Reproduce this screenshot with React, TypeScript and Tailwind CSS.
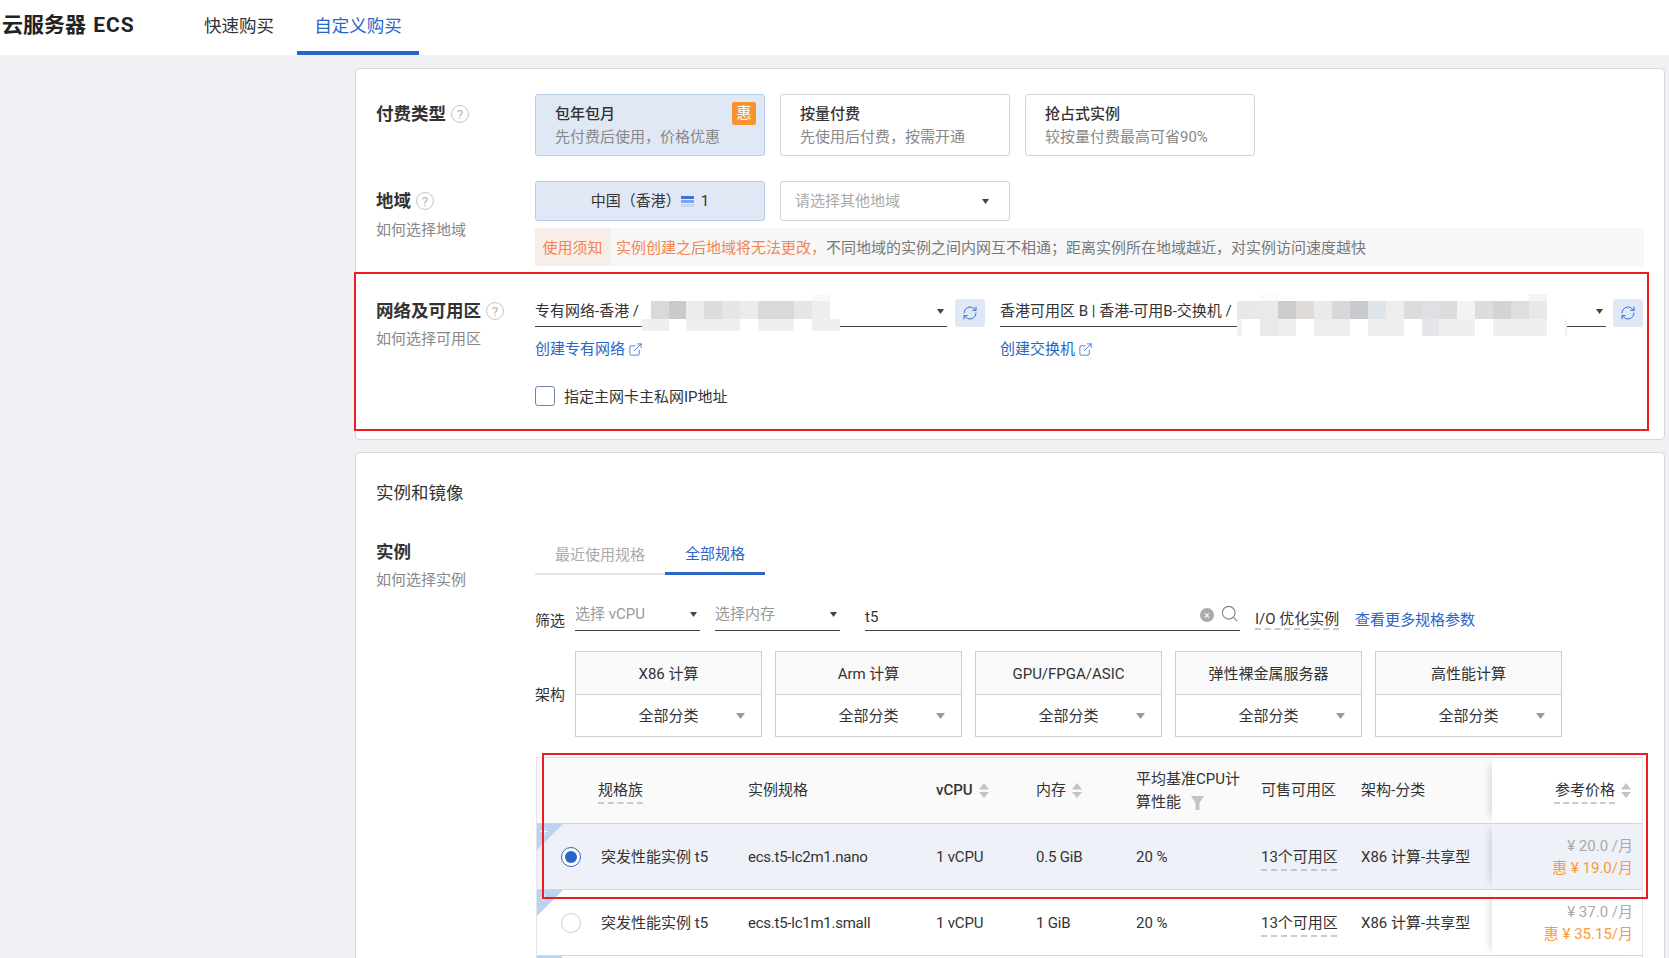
import { ExternalLink, RefreshCw, Search } from "lucide-react";

const label = "text-[17.5px] leading-[26px] font-bold text-[#333]";
const subLabel = "text-[15px] leading-5 text-[#888]";
const dashed = "underline decoration-dashed decoration-[#bbb] underline-offset-[7px] [text-decoration-skip-ink:none]";

// pixel blocks covering the hidden resource names: x, y, w, h, colour
const mosaicVpc: [number, number, number, number, string][] = [
  [9, 6, 18, 18, "#d9d9d9"], [27, 6, 17, 18, "#c9cacc"], [44, 6, 18, 18, "#ececec"], [62, 6, 18, 18, "#dcdddd"],
  [80, 6, 18, 18, "#e6e6e6"], [98, 6, 18, 18, "#ebebeb"], [116, 6, 36, 18, "#dadada"], [152, 6, 18, 18, "#e6e6e6"],
  [170, 0, 18, 6, "#f8f8f8"], [170, 6, 18, 18, "#eeeeee"],
  [0, 24, 27, 12, "#efefef"], [44, 24, 54, 12, "#efefef"], [116, 24, 36, 12, "#efefef"], [170, 24, 28, 12, "#efefef"],
];

const mosaicSwitch: [number, number, number, number, string][] = [
  [0, 7, 23, 18, "#e6e8ea"], [23, 7, 18, 18, "#e9e9e9"], [41, 7, 18, 18, "#cccccc"], [59, 7, 18, 18, "#e0dcd8"],
  [77, 7, 18, 18, "#eaeaea"], [95, 7, 18, 18, "#d8d8d8"], [113, 7, 18, 18, "#c9cace"], [131, 7, 18, 18, "#dfe4e8"],
  [149, 7, 18, 18, "#ededed"], [167, 7, 18, 18, "#dddbdc"], [185, 7, 17, 18, "#e0dfe3"], [202, 7, 18, 18, "#dddcda"],
  [220, 7, 18, 18, "#f3f3f3"], [238, 7, 18, 18, "#dedddd"], [256, 7, 18, 18, "#d4d3d3"], [274, 7, 18, 18, "#dedede"],
  [292, 7, 18, 18, "#e8e8e6"], [292, 0, 18, 7, "#f5f4f2"], [23, 0, 18, 7, "#fbfbfb"],
  [0, 25, 5, 17, "#f2f2f2"], [23, 25, 18, 17, "#e8eaea"], [41, 25, 18, 17, "#efefef"], [77, 25, 36, 17, "#eeeeee"],
  [131, 25, 36, 17, "#efefef"], [185, 25, 17, 17, "#e6e6ea"], [202, 25, 36, 17, "#efefef"], [256, 25, 54, 17, "#efefef"],
  [328, 25, 2, 17, "#efefef"],
];

const archs = ["X86 计算", "Arm 计算", "GPU/FPGA/ASIC", "弹性裸金属服务器", "高性能计算"];

const rows = [
  { spec: "ecs.t5-lc2m1.nano", mem: "0.5 GiB", price: "¥ 20.0 /月", sale: "惠 ¥ 19.0/月", selected: true },
  { spec: "ecs.t5-lc1m1.small", mem: "1 GiB", price: "¥ 37.0 /月", sale: "惠 ¥ 35.15/月", selected: false },
];

const cols = "grid grid-cols-[61px_150px_188px_100px_100px_125px_100px_131px_1fr]";

function Help() {
  return (
    <span className="ml-[5px] inline-flex h-[18px] w-[18px] items-center justify-center rounded-full border-[1.5px] border-[#c6c6c6] text-[13px] leading-none font-normal text-[#b5b5b5]">
      ?
    </span>
  );
}

function Caret({ className = "" }: { className?: string }) {
  return (
    <svg width="7" height="5" viewBox="0 0 7 5" className={className}>
      <path d="M0 0h7L3.5 5z" fill="#444" />
    </svg>
  );
}

function SortIcon() {
  return (
    <svg width="10" height="15" viewBox="0 0 10 15" className="ml-[6px]">
      <path d="M5 0l5 6.5H0z" fill="#c4c4c4" />
      <path d="M0 9h10l-5 6z" fill="#c4c4c4" />
    </svg>
  );
}

function Corner() {
  return (
    <svg width="26" height="26" viewBox="0 0 26 26" className="absolute top-0 left-0">
      <path d="M0 0h26L0 26z" fill="#b9d3f0" />
      <path d="M7 4v7M3.5 7.5h7" stroke="#fff" strokeWidth="1" />
    </svg>
  );
}

function Refresh() {
  return (
    <div className="flex h-7 w-[30px] shrink-0 items-center justify-center rounded-[3px] bg-[#e0e8f6]">
      <RefreshCw size={16} strokeWidth={1.5} className="text-[#3b6fd0]" />
    </div>
  );
}

function Mosaic({ w, h, cells, className }: { w: number; h: number; cells: [number, number, number, number, string][]; className: string }) {
  return (
    <svg width={w} height={h} viewBox={`0 0 ${w} ${h}`} className={className}>
      <rect width={w} height={h} fill="#fff" />
      {cells.map(([x, y, cw, ch, fill], i) => (
        <rect key={i} x={x} y={y} width={cw} height={ch} fill={fill} />
      ))}
    </svg>
  );
}

function PayOption({ title, desc, active }: { title: string; desc: string; active?: boolean }) {
  return (
    <div
      className={`relative h-[62px] w-[230px] rounded-[3px] border pt-[7px] pl-[19px] ${
        active ? "border-[#b4cdec] bg-[#e0e8f6]" : "border-[#d0d3d8] bg-white"
      }`}
    >
      <div className="text-[15px] leading-[24px] font-medium text-[#333]">{title}</div>
      <div className="text-[15px] leading-[23px] text-[#888]">{desc}</div>
      {active && (
        <span className="absolute top-[7px] right-[8px] flex h-[23px] w-[24px] items-center justify-center rounded-[2px] bg-[#f7952c] text-[15px] text-white">
          惠
        </span>
      )}
    </div>
  );
}

export default function App() {
  return (
    <div className="h-screen overflow-hidden bg-[#eff1f5] font-['Roboto','Noto_Sans_CJK_SC',sans-serif] text-[#333]">
      <header className="flex h-[55px] bg-white">
        <div className="w-[187px] pl-[2px] text-[21px] leading-[50px] font-bold text-[#222]">
          云服务器 <span className="ml-[2px] tracking-[1px]">ECS</span>
        </div>
        <div className="flex h-[55px] w-[104px] items-center justify-center pb-[2px] text-[17.5px]">快速购买</div>
        <div className="ml-[6px] flex h-[55px] w-[122px] items-center justify-center border-b-4 border-[#2b65c8] pt-[2px] text-[17.5px] text-[#2b65c8]">
          自定义购买
        </div>
      </header>

      <main className="pt-[13px] pr-[4px] pl-[355px]">
        <section className="rounded-[4px] border border-[#d5d7da] bg-white pt-[25px] pb-[8px]">
          <div className="flex">
            <div className="w-[179px] pt-[7px] pl-[20px]">
              <div className={`flex items-center ${label}`}>
                付费类型
                <Help />
              </div>
            </div>
            <div className="flex gap-[15px]">
              <PayOption title="包年包月" desc="先付费后使用，价格优惠" active />
              <PayOption title="按量付费" desc="先使用后付费，按需开通" />
              <PayOption title="抢占式实例" desc="较按量付费最高可省90%" />
            </div>
          </div>

          <div className="mt-[25px] flex">
            <div className="w-[179px] pt-[7px] pl-[20px]">
              <div className={`flex items-center ${label}`}>
                地域
                <Help />
              </div>
              <div className={`mt-[6px] ${subLabel}`}>如何选择地域</div>
            </div>
            <div>
              <div className="flex gap-[15px]">
                <div className="flex h-10 w-[230px] items-center justify-center rounded-[3px] border border-[#b4cdec] bg-[#e0e8f6] text-[15px]">
                  中国（香港）
                  <svg width="13" height="11" viewBox="0 0 13 11" className="mr-[7px]">
                    <rect width="13" height="3" fill="#3f74d3" />
                    <rect y="4" width="13" height="3" fill="#7ea6e6" />
                    <rect y="8" width="13" height="3" fill="#c0d6f3" />
                  </svg>
                  1
                </div>
                <div className="flex h-10 w-[230px] items-center justify-between rounded-[3px] border border-[#d0d3d8] pr-5 pl-[14px] text-[15px] text-[#aaa]">
                  请选择其他地域
                  <Caret />
                </div>
              </div>
              <div className="mt-[7px] flex h-[38px] w-[1109px] items-center bg-[#f7f7f7] text-[15px]">
                <div className="flex h-full w-[75px] items-center justify-center bg-[#f7eee9] pt-[2px] text-[#f5854f]">使用须知</div>
                <span className="ml-[6px] pt-[2px] text-[#f5854f]">实例创建之后地域将无法更改，</span>
                <span className="pt-[2px] text-[#777]">不同地域的实例之间内网互不相通；距离实例所在地域越近，对实例访问速度越快</span>
              </div>
            </div>
          </div>

          <div className="mt-[6px] -ml-[2px] flex h-[159px] w-[1295px] border-2 border-[#ed1c24] pt-[23px]">
            <div className="w-[179px] pt-[1px] pl-[20px]">
              <div className={`flex items-center ${label}`}>
                网络及可用区
                <Help />
              </div>
              <div className={`mt-[5px] ${subLabel}`}>如何选择可用区</div>
            </div>
            <div className="pt-[2px]">
              <div className="flex">
                <div className="w-[450px]">
                  <div className="flex">
                    <div className="relative flex h-7 w-[412px] items-center justify-between border-b border-[#444] pr-[3px] pb-[3px] text-[15px]">
                      <span>专有网络-香港 /</span>
                      <Caret />
                      <Mosaic w={198} h={36} cells={mosaicVpc} className="absolute top-[-4px] left-[107px]" />
                    </div>
                    <div className="ml-2">
                      <Refresh />
                    </div>
                  </div>
                  <a className="mt-[12px] flex items-center text-[15px] leading-5 text-[#2b65c8]">
                    创建专有网络
                    <ExternalLink size={15} strokeWidth={1.25} className="ml-[3px]" />
                  </a>
                </div>
                <div className="ml-[15px]">
                  <div className="flex">
                    <div className="relative flex h-7 w-[606px] items-center justify-between border-b border-[#444] pr-[3px] pb-[3px] text-[15px]">
                      <span>香港可用区 B | 香港-可用B-交换机 /</span>
                      <Caret />
                      <Mosaic w={330} h={42} cells={mosaicSwitch} className="absolute top-[-5px] left-[237px]" />
                    </div>
                    <div className="ml-[7px]">
                      <Refresh />
                    </div>
                  </div>
                  <a className="mt-[12px] flex items-center text-[15px] leading-5 text-[#2b65c8]">
                    创建交换机
                    <ExternalLink size={15} strokeWidth={1.25} className="ml-[3px]" />
                  </a>
                </div>
              </div>
              <div className="mt-[25px] flex items-center text-[15px]">
                <div className="h-[20px] w-[20px] rounded-[3px] border border-[#6b84a8]" />
                <span className="ml-[9px] pt-[2px]">指定主网卡主私网IP地址</span>
              </div>
            </div>
          </div>
        </section>

        <section className="mt-[12px] rounded-[4px] border border-[#d5d7da] bg-white pt-[27px] pb-10">
          <div className="pl-[20px] text-[17.5px] leading-[26px]">实例和镜像</div>
          <div className="mt-[29px] flex">
            <div className="w-[179px] pt-[4px] pl-[20px]">
              <div className={label}>实例</div>
              <div className={`mt-[5px] ${subLabel}`}>如何选择实例</div>
            </div>
            <div>
              <div className="flex h-10 text-[15px]">
                <div className="flex w-[130px] items-center justify-center border-b-2 border-[#e5e5e5] pt-[2px] text-[#aaa]">最近使用规格</div>
                <div className="flex w-[100px] items-center justify-center border-b-[3px] border-[#2b65c8] pt-[2px] text-[#2b65c8]">全部规格</div>
              </div>

              <div className="mt-[25px] flex h-[31px] items-end text-[15px]">
                <div className="w-10 leading-5">筛选</div>
                <div className="flex h-[31px] w-[125px] items-center justify-between border-b border-[#444] pr-[3px] pb-[1px] text-[#999]">
                  选择 vCPU
                  <Caret />
                </div>
                <div className="ml-[15px] flex h-[31px] w-[125px] items-center justify-between border-b border-[#444] pr-[3px] pb-[1px] text-[#999]">
                  选择内存
                  <Caret />
                </div>
                <div className="ml-[25px] flex h-[31px] w-[375px] items-center border-b border-[#444] pt-[4px]">
                  <span className="flex-1">t5</span>
                  <span className="mb-[4px] flex h-[14px] w-[14px] items-center justify-center rounded-full bg-[#aaa] text-[11px] leading-none text-white">×</span>
                  <Search size={19} strokeWidth={1.5} className="mr-[1px] mb-[8px] ml-[6px] text-[#888]" />
                </div>
                <div className="ml-[15px] flex h-[31px] w-[85px] items-center pt-[8px] whitespace-nowrap">
                  <span className="underline decoration-dashed decoration-[#bbb] underline-offset-[4px] [text-decoration-skip-ink:none]">I/O 优化实例</span>
                </div>
                <div className="ml-[15px] flex h-[31px] items-center pt-[10px] whitespace-nowrap text-[#2b65c8]">查看更多规格参数</div>
              </div>

              <div className="mt-[20px] flex items-center text-[15px]">
                <div className="w-10 pt-[2px]">架构</div>
                <div className="flex gap-[13px]">
                  {archs.map((a) => (
                    <div key={a} className="w-[187px] border border-[#cfcfcf]">
                      <div className="flex h-[43px] items-center justify-center border-b border-[#cfcfcf] bg-[#f9f9f9] pt-[2px]">{a}</div>
                      <div className="grid h-[41px] grid-cols-[1fr_auto_1fr] items-center">
                        <span />
                        <span className="pt-[2px]">全部分类</span>
                        <svg width="9" height="6" viewBox="0 0 9 6" className="mr-[16px] justify-self-end">
                          <path d="M0 0h9L4.5 6z" fill="#999" />
                        </svg>
                      </div>
                    </div>
                  ))}
                </div>
              </div>

              <div className="relative mt-[20px] ml-[1px] w-[1107px] border-x border-[#e4e4e4] text-[15px]">
                <div className={`${cols} h-[67px] items-center border-y border-b-[#d5d5d5] border-t-[#e4e4e4] bg-[#fafafa]`}>
                  <span />
                  <span>
                    <span className={dashed}>规格族</span>
                  </span>
                  <span>实例规格</span>
                  <span className="flex items-center font-medium">
                    vCPU
                    <SortIcon />
                  </span>
                  <span className="flex items-center">
                    内存
                    <SortIcon />
                  </span>
                  <span className="leading-[23px]">
                    平均基准CPU计
                    <br />
                    算性能
                    <svg width="13" height="14" viewBox="0 0 13 14" className="ml-[10px] inline-block">
                      <path d="M0 0h13L8.5 7v7h-4V7z" fill="#c4c4c4" />
                    </svg>
                  </span>
                  <span>可售可用区</span>
                  <span>架构-分类</span>
                  <span className="flex h-full items-center justify-end bg-white pr-[11px] shadow-[-8px_0_8px_-6px_rgba(0,0,0,0.14)]">
                    <span className={dashed}>参考价格</span>
                    <SortIcon />
                  </span>
                </div>

                {rows.map((r) => (
                  <div key={r.spec} className={`${cols} relative h-[66px] items-center border-b border-[#d5d5d5] ${r.selected ? "bg-[#eef1f7]" : "bg-white"}`}>
                    <Corner />
                    <span className="pl-[24px]">
                      <span className={`flex h-5 w-5 items-center justify-center rounded-full border ${r.selected ? "border-[#2b65c8] bg-white" : "border-[#ccc] bg-white"}`}>
                        {r.selected && <span className="h-3 w-3 rounded-full bg-[#2b65c8]" />}
                      </span>
                    </span>
                    <span className="pt-[2px] pl-[3px]">突发性能实例 t5</span>
                    <span className="pt-[2px] tracking-[-0.25px]">{r.spec}</span>
                    <span className="pt-[2px] tracking-[-0.2px]">1 vCPU</span>
                    <span className="pt-[2px] tracking-[-0.2px]">{r.mem}</span>
                    <span className="pt-[2px]">20 %</span>
                    <span className="pt-[2px]">
                      <span className={dashed}>13个可用区</span>
                    </span>
                    <span className="pt-[2px]">X86 计算-共享型</span>
                    <div className={`flex h-full flex-col items-end justify-center pr-[9px] leading-[22px] shadow-[-8px_0_8px_-6px_rgba(0,0,0,0.14)] ${r.selected ? "bg-[#eef1f7]" : "bg-white"}`}>
                      <span className="text-[#aaa]">{r.price}</span>
                      <span className="text-[#f89a3c]">{r.sale}</span>
                    </div>
                  </div>
                ))}

                <div className="relative h-[66px] bg-white">
                  <Corner />
                </div>

                <div className="pointer-events-none absolute top-[-4px] right-[-6px] left-[5px] h-[146px] border-2 border-[#ed1c24]" />
              </div>
            </div>
          </div>
        </section>
      </main>
    </div>
  );
}
